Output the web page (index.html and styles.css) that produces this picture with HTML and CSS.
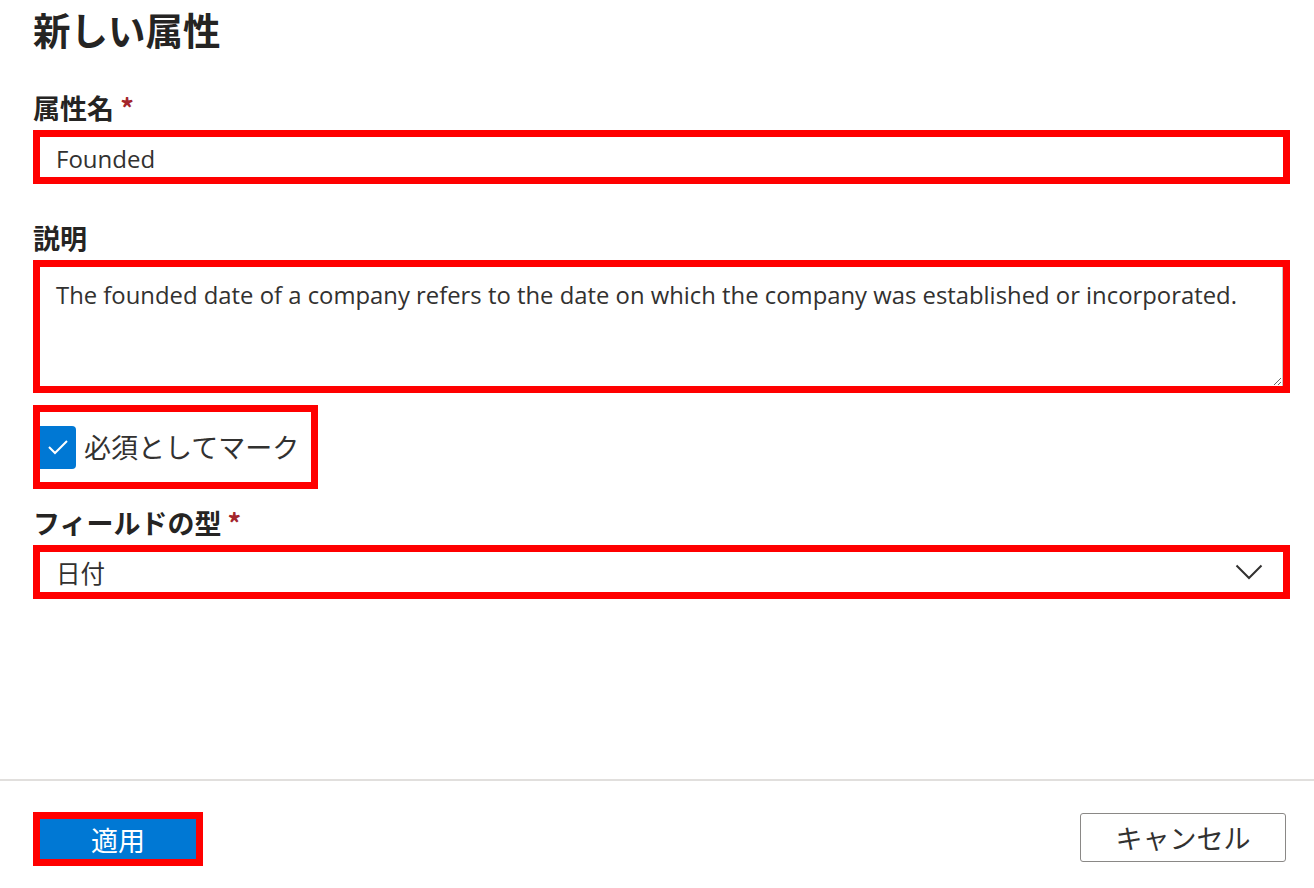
FILE: index.html
```html
<!DOCTYPE html>
<html lang="ja">
<head>
<meta charset="utf-8">
<title>新しい属性</title>
<link rel="stylesheet" href="styles.css">
</head>
<body>
<div class="page">
  <main class="content">
    <h1 class="title">新しい属性</h1>

    <div class="field-label field-label--first">属性名 <span class="req">*</span></div>
    <div class="mark mark--input">
      <div class="text-input">Founded</div>
    </div>

    <div class="field-label field-label--second">説明</div>
    <div class="mark mark--area">
      <textarea class="text-area" readonly>The founded date of a company refers to the date on which the company was established or incorporated.</textarea>
    </div>

    <div class="mark mark--check">
      <div class="check-row">
        <span class="checkbox">
          <svg width="22" height="16" viewBox="0 0 22 16"><polyline points="2,8 8,14 20,2" fill="none" stroke="#fff" stroke-width="2"/></svg>
        </span>
        <span class="check-text">必須としてマーク</span>
      </div>
    </div>

    <div class="field-label field-label--third">フィールドの型 <span class="req">*</span></div>
    <div class="mark mark--input">
      <div class="dropdown">
        <span class="dropdown-value">日付</span>
        <svg class="chevron" width="28" height="16" viewBox="0 0 28 16"><polyline points="1.5,1.5 14,14 26.5,1.5" fill="none" stroke="#323130" stroke-width="2"/></svg>
      </div>
    </div>
  </main>

  <footer class="footer">
    <div class="mark mark--btn">
      <button class="btn-primary" type="button">適用</button>
    </div>
    <button class="btn-default" type="button">キャンセル</button>
  </footer>
</div>
</body>
</html>
```
FILE: styles.css
```css
html, body {
  margin: 0;
  padding: 0;
  background: #fff;
}

body {
  font-family: "Open Sans", "Noto Sans CJK JP", sans-serif;
  color: #323130;
}

.page {
  width: 1314px;
  height: 888px;
  display: flex;
  flex-direction: column;
  overflow: hidden;
}

.content {
  flex: 1;
  padding: 0 24px 0 33px;
}

.title {
  margin: 0;
  font-family: "Noto Sans CJK JP", sans-serif;
  font-size: 37.5px;
  font-weight: 700;
  line-height: 58px;
  color: #252423;
}

.field-label {
  font-family: "Noto Sans CJK JP", sans-serif;
  font-size: 27px;
  font-weight: 700;
  line-height: 34px;
  margin-bottom: 5px;
  color: #252423;
}

.field-label--first { margin-top: 33px; }
.field-label--second { margin-top: 37px; }
.field-label--third { margin-top: 17px; }

.req {
  color: #a4262c;
  font-weight: 700;
}

.mark {
  border: 7px solid #ff0000;
  box-sizing: border-box;
}

.mark--input {
  height: 54px;
}

.mark--area {
  height: 133px;
}

.mark--check {
  margin-top: 12px;
  width: 285px;
  height: 84px;
  display: flex;
  align-items: center;
}

.text-input {
  height: 40px;
  padding: 2px 16px 0;
  box-sizing: border-box;
  display: flex;
  align-items: center;
  font-size: 24px;
  color: #323130;
}

.text-area {
  display: block;
  width: 100%;
  height: 100%;
  box-sizing: border-box;
  margin: 0;
  border: none;
  border-right: 1px solid #c8c6c4;
  padding: 13px 16px 10px;
  font-family: "Open Sans", "Noto Sans CJK JP", sans-serif;
  font-size: 23.85px;
  line-height: 30px;
  color: #323130;
  resize: vertical;
  outline: none;
  background: #fff;
}

.check-row {
  display: flex;
  align-items: center;
  gap: 8px;
}

.checkbox {
  width: 36px;
  height: 43px;
  background: #0078d4;
  border-radius: 0 4px 4px 0;
  display: flex;
  align-items: center;
  justify-content: center;
}

.check-text {
  font-family: "Noto Sans CJK JP", sans-serif;
  font-size: 27px;
  line-height: 34px;
  color: #323130;
}

.dropdown {
  height: 40px;
  padding: 0 16px 0 16px;
  display: flex;
  align-items: center;
  justify-content: space-between;
}

.dropdown-value {
  font-family: "Noto Sans CJK JP", sans-serif;
  font-size: 24.5px;
  color: #323130;
}

.chevron {
  margin-right: 4px;
}

.footer {
  height: 109px;
  box-sizing: border-box;
  border-top: 2px solid #e1dfdd;
  padding: 31px 28px 0 33px;
  display: flex;
  justify-content: space-between;
  align-items: flex-start;
}

.mark--btn {
  width: 170px;
  height: 54px;
}

.btn-primary {
  display: block;
  width: 100%;
  height: 100%;
  margin: 0;
  border: none;
  background: #0078d4;
  color: #fff;
  font-family: "Noto Sans CJK JP", sans-serif;
  font-size: 27px;
  padding: 0;
}

.btn-default {
  margin-top: 1px;
  width: 206px;
  height: 49px;
  background: #fff;
  border: 1px solid #8a8886;
  border-radius: 3px;
  color: #323130;
  font-family: "Noto Sans CJK JP", sans-serif;
  font-size: 27px;
  padding: 0;
}
```
